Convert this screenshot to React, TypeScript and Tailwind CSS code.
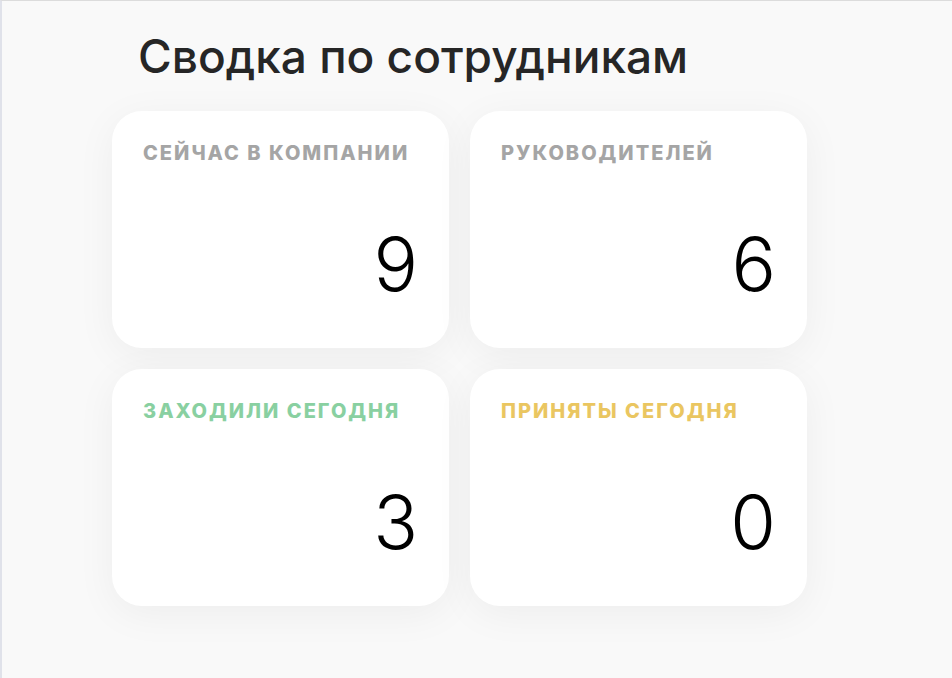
const stats = [
  { label: "Сейчас в компании", value: 9, color: "text-[#a5a5a5]" },
  { label: "Руководителей", value: 6, color: "text-[#a5a5a5]" },
  { label: "Заходили сегодня", value: 3, color: "text-[#89d0a1]" },
  { label: "Приняты сегодня", value: 0, color: "text-[#eac661]" },
];

export default function App() {
  return (
    <div className="min-h-screen w-full bg-[#f9f9f9] border-t border-t-[#dcdcdc] border-l-2 border-l-[#e0e2ea] font-['Inter','Noto_Sans',sans-serif]">
      <div className="pl-[110px] pt-[27px]">
        <h1 className="pl-[26px] text-[46px] leading-[57px] font-medium text-[#262626]">
          Сводка по сотрудникам
        </h1>
        <div className="mt-[26px] grid grid-cols-[337px_337px] gap-[21px]">
          {stats.map((s, i) => (
            <div
              key={i}
              className="h-[237px] rounded-[30px] bg-white shadow-[0_8px_40px_rgba(0,0,0,0.05)] flex flex-col pl-[31px] pr-[31px] pt-[30px]"
            >
              <div className={`text-[20px] leading-[24px] font-extrabold uppercase tracking-[2px] ${s.color}`}>
                {s.label}
              </div>
              <div className="mt-[54px] text-right text-[74px] leading-[90px] font-light text-black">
                {s.value}
              </div>
            </div>
          ))}
        </div>
      </div>
    </div>
  );
}
